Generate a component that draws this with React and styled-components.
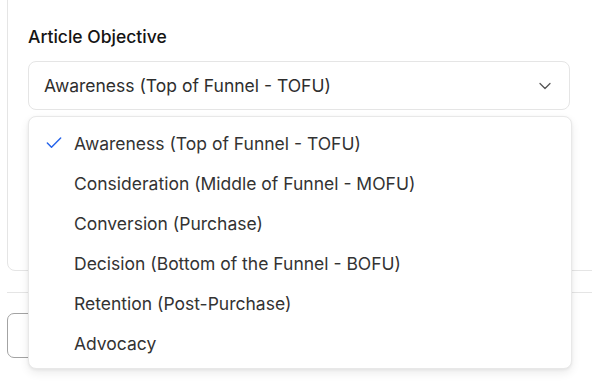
import React, { useState } from 'react';
import styled, { createGlobalStyle } from 'styled-components';
import { Check, ChevronDown } from 'lucide-react';

const GlobalStyle = createGlobalStyle`
  html, body {
    margin: 0;
    padding: 0;
    background: #ffffff;
    font-family: Inter, "Noto Sans", sans-serif;
  }
`;

const Page = styled.div`
  width: 592px;
  height: 387px;
  overflow: hidden;
  padding-left: 7px;
  box-sizing: border-box;
`;

const Card = styled.section`
  margin-top: -12px;
  margin-right: -40px;
  height: 283px;
  box-sizing: border-box;
  border: 1px solid #e5e5e5;
  border-radius: 8px;
  padding: 36px 20px 0;
`;

const Label = styled.div`
  font-size: 17.5px;
  line-height: 24px;
  font-weight: 500;
  color: #141414;
  margin-bottom: 12px;
`;

const SelectWrap = styled.div`
  position: relative;
  width: 542px;
`;

const Trigger = styled.button`
  width: 100%;
  height: 49px;
  display: flex;
  align-items: center;
  justify-content: space-between;
  padding: 0 14px 0 15px;
  box-sizing: border-box;
  background: #fff;
  border: 1px solid #e5e5e5;
  border-radius: 8px;
  font-family: inherit;
  font-size: 17.5px;
  color: #2e2e2e;
  cursor: pointer;
`;

const Menu = styled.ul`
  position: absolute;
  z-index: 10;
  top: calc(100% + 6px);
  left: 0;
  width: 544px;
  margin: 0;
  padding: 6px 0 5px;
  list-style: none;
  box-sizing: border-box;
  background: #fff;
  border: 1px solid #e8e8e8;
  border-radius: 8px;
  box-shadow: 0 4px 10px rgba(0, 0, 0, 0.08), 0 1px 3px rgba(0, 0, 0, 0.06);
`;

const Option = styled.li`
  height: 40px;
  display: flex;
  align-items: center;
  padding-left: 15px;
  font-size: 17.5px;
  color: #333333;
  cursor: pointer;
`;

const CheckSlot = styled.span`
  width: 30px;
  display: flex;
  align-items: center;
  color: #2563eb;
`;

const Divider = styled.hr`
  margin: 21px 0 0;
  border: none;
  border-top: 1px solid #e5e5e5;
  margin-right: -20px;
`;

const Footer = styled.div`
  padding-top: 20px;
  display: flex;
`;

const GhostButton = styled.button`
  width: 120px;
  height: 45px;
  background: #fff;
  border: 1px solid #a3a3a3;
  border-radius: 7px;
`;

const options = [
  'Awareness (Top of Funnel - TOFU)',
  'Consideration (Middle of Funnel - MOFU)',
  'Conversion (Purchase)',
  'Decision (Bottom of the Funnel - BOFU)',
  'Retention (Post-Purchase)',
  'Advocacy',
];

export default function App() {
  const [value, setValue] = useState(options[0]);

  return (
    <>
      <GlobalStyle />
      <Page>
        <Card>
          <Label>Article Objective</Label>
          <SelectWrap>
            <Trigger>
              <span>{value}</span>
              <ChevronDown size={20} strokeWidth={1.5} color="#555" />
            </Trigger>
            <Menu>
              {options.map((opt) => (
                <Option key={opt} onClick={() => setValue(opt)}>
                  <CheckSlot>
                    {opt === value && <Check size={20} strokeWidth={1.75} />}
                  </CheckSlot>
                  {opt}
                </Option>
              ))}
            </Menu>
          </SelectWrap>
        </Card>
        <Divider />
        <Footer>
          <GhostButton />
        </Footer>
      </Page>
    </>
  );
}
